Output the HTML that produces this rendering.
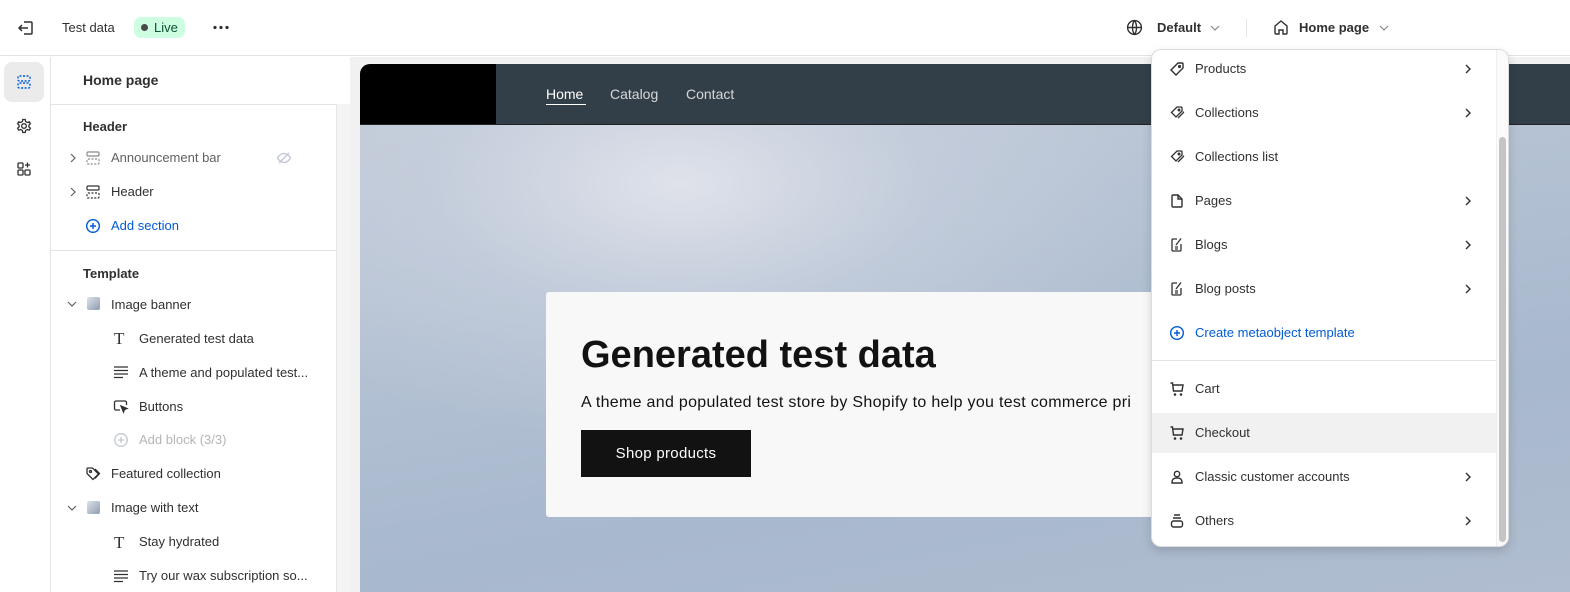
<!DOCTYPE html>
<html><head><meta charset="utf-8"><style>
*{box-sizing:border-box;margin:0;padding:0}
body{width:1570px;height:592px;overflow:hidden;font-family:"Liberation Sans",sans-serif;background:#fff;position:relative;color:#303030;font-size:13px}
.abs{position:absolute}
.top{left:0;top:0;width:1570px;height:56px;border-bottom:1px solid #e3e3e3;background:#fff}
.rail{left:0;top:57px;width:51px;height:535px;border-right:1px solid #e3e3e3}
.panel{left:51px;top:57px;width:285px;height:535px}
.row{position:absolute;left:0;height:20px;line-height:20px;font-size:13px;color:#303030;white-space:nowrap}
.gray{color:#616161}
svg{position:absolute}
.preview{left:350px;top:57px;width:1220px;height:535px;background:#f1f1f1}
.menu{left:1151px;top:49px;width:358px;height:498px;background:#fff;border:1px solid #dcdcdc;border-radius:10px;box-shadow:0 4px 10px rgba(0,0,0,.15);overflow:hidden}
.mi{position:absolute;left:0;width:344px;height:40px;line-height:40px;font-size:13px;color:#303030}
.mi span{position:absolute;left:43px}
.mi .ch{position:absolute;left:312px;top:14px}
</style></head><body>
<div class="abs top">
<svg style="left:17px;top:19px" width="18" height="18" viewBox="0 0 18 18" fill="none" stroke="#303030" stroke-width="1.5"><path d="M7 3h7a1 1 0 0 1 1 1v10a1 1 0 0 1-1 1H7"/><path d="M11 9H2M5 6L2 9l3 3"/></svg>
<div class="abs" style="left:62px;top:20px;font-size:13px">Test data</div>
<div class="abs" style="left:134px;top:17px;width:51px;height:21px;border-radius:7px;background:#cdfee1;font-size:13px;line-height:21px;padding-left:20px;color:#0c5132">Live</div>
<div class="abs" style="left:141px;top:24px;width:7px;height:7px;border-radius:50%;background:#4a4a4a"></div>
<svg style="left:212px;top:25px" width="18" height="5" viewBox="0 0 18 5" fill="#303030"><circle cx="3" cy="2.5" r="1.6"/><circle cx="9" cy="2.5" r="1.6"/><circle cx="15" cy="2.5" r="1.6"/></svg>
<svg style="left:1126px;top:19px" width="17" height="17" viewBox="0 0 16 16" fill="none" stroke="#303030" stroke-width="1.3"><circle cx="8" cy="8" r="6.5"/><path d="M1.5 8h13M8 1.5c-2.5 3-2.5 10 0 13M8 1.5c2.5 3 2.5 10 0 13"/></svg>
<div class="abs" style="left:1157px;top:20px;font-weight:bold;font-size:13px">Default</div>
<svg style="left:1210px;top:24px" width="10" height="8" viewBox="0 0 10 8" fill="none" stroke="#8a8a8a" stroke-width="1.2"><path d="M1 2l4 4 4-4"/></svg>
<div class="abs" style="left:1246px;top:19px;width:1px;height:18px;background:#e3e3e3"></div>
<svg style="left:1273px;top:19px" width="16" height="17" viewBox="0 0 16 17" fill="none" stroke="#303030" stroke-width="1.4"><path d="M2 7l6-5 6 5v7a1 1 0 0 1-1 1h-3v-4H6v4H3a1 1 0 0 1-1-1z"/></svg>
<div class="abs" style="left:1299px;top:20px;font-weight:bold;font-size:13px">Home page</div>
<svg style="left:1379px;top:24px" width="10" height="8" viewBox="0 0 10 8" fill="none" stroke="#8a8a8a" stroke-width="1.2"><path d="M1 2l4 4 4-4"/></svg>
</div>
<div class="abs rail">
<div class="abs" style="left:4px;top:5px;width:40px;height:40px;border-radius:8px;background:#ebebeb"></div>
<svg style="left:16px;top:17px" width="16" height="16" viewBox="0 0 16 16" fill="none" stroke="#005bd3" stroke-width="1.4"><rect x="2" y="2" width="12" height="5" rx="1.5" stroke-dasharray="2 1.5"/><rect x="2" y="9" width="12" height="5" rx="1.5" stroke-dasharray="2 1.5"/></svg>
<svg style="left:16px;top:61px" width="16" height="16" viewBox="0 0 16 16" fill="none" stroke="#303030" stroke-width="1.3"><circle cx="8" cy="8" r="2.3"/><path d="M6.8 1.5h2.4l.4 2 1.7 1 1.9-.7 1.2 2-1.5 1.4v1.6l1.5 1.4-1.2 2-1.9-.7-1.7 1-.4 2H6.8l-.4-2-1.7-1-1.9.7-1.2-2 1.5-1.4V7.2L1.6 5.8l1.2-2 1.9.7 1.7-1z"/></svg>
<svg style="left:16px;top:104px" width="16" height="16" viewBox="0 0 16 16" fill="none" stroke="#303030" stroke-width="1.3"><rect x="2" y="2" width="5" height="5" rx="1"/><rect x="2" y="9" width="5" height="5" rx="1"/><rect x="9" y="9" width="5" height="5" rx="1"/><path d="M11.5 1.5v5M9 4h5"/></svg>
</div>
<div class="abs panel">
<div class="row" style="left:32px;top:13px;font-size:14px;font-weight:600">Home page</div>
<div class="abs" style="left:0;top:47px;width:299px;height:1px;background:#e3e3e3"></div>
<div class="row" style="left:32px;top:60px;font-weight:600">Header</div>
<svg style="left:18px;top:96px" width="8" height="10" viewBox="0 0 8 10" fill="none" stroke="#616161" stroke-width="1.2"><path d="M2 1l4 4-4 4"/></svg>
<svg style="left:34px;top:93px" width="16" height="16" viewBox="0 0 16 16" fill="none" stroke="#8a8a8a" stroke-width="1.2"><rect x="2" y="2" width="12" height="4" rx="1"/><rect x="2" y="9" width="12" height="5" rx="1" stroke-dasharray="2 1.5"/></svg>
<div class="row gray" style="left:60px;top:91px">Announcement bar</div>
<svg style="left:225px;top:93px" width="16" height="16" viewBox="0 0 16 16" fill="none" stroke="#c2c6d6" stroke-width="1.3"><path d="M1.5 8s2.5-4.5 6.5-4.5S14.5 8 14.5 8 12 12.5 8 12.5 1.5 8 1.5 8z"/><path d="M3 13L13 3"/></svg>
<svg style="left:18px;top:130px" width="8" height="10" viewBox="0 0 8 10" fill="none" stroke="#616161" stroke-width="1.2"><path d="M2 1l4 4-4 4"/></svg>
<svg style="left:34px;top:127px" width="16" height="16" viewBox="0 0 16 16" fill="none" stroke="#303030" stroke-width="1.2"><rect x="2" y="2" width="12" height="4" rx="1"/><rect x="2" y="9" width="12" height="5" rx="1" stroke-dasharray="2 1.5"/></svg>
<div class="row" style="left:60px;top:125px">Header</div>
<svg style="left:34px;top:161px" width="16" height="16" viewBox="0 0 16 16" fill="none" stroke="#005bd3" stroke-width="1.4"><circle cx="8" cy="8" r="6.3"/><path d="M8 5v6M5 8h6"/></svg>
<div class="row" style="left:60px;top:159px;color:#005bd3">Add section</div>
<div class="abs" style="left:0;top:193px;width:285px;height:1px;background:#e3e3e3"></div>
<div class="row" style="left:32px;top:207px;font-weight:600">Template</div>
<svg style="left:16px;top:243px" width="10" height="8" viewBox="0 0 10 8" fill="none" stroke="#616161" stroke-width="1.2"><path d="M1 2l4 4 4-4"/></svg>
<div class="abs" style="left:36px;top:240px;width:13px;height:13px;border-radius:2px;background:linear-gradient(135deg,#dfe3ea,#8d9bb0)"></div>
<div class="row" style="left:60px;top:238px">Image banner</div>
<div class="row" style="left:63px;top:272px;font-family:'Liberation Serif',serif;font-size:17px">T</div>
<div class="row" style="left:88px;top:272px">Generated test data</div>
<svg style="left:62px;top:308px" width="16" height="14" viewBox="0 0 16 14" stroke="#303030" stroke-width="1.3"><path d="M1 2h14M1 5.5h14M1 9h14M1 12.5h9"/></svg>
<div class="row" style="left:88px;top:306px">A theme and populated test...</div>
<svg style="left:62px;top:341px" width="16" height="16" viewBox="0 0 16 16" fill="none" stroke="#303030" stroke-width="1.3"><path d="M7 12H3a1.5 1.5 0 0 1-1.5-1.5v-6A1.5 1.5 0 0 1 3 3h9a1.5 1.5 0 0 1 1.5 1.5V7"/><path d="M8 8l6 2.5-2.5 1-1 2.5z" fill="#303030"/></svg>
<div class="row" style="left:88px;top:340px">Buttons</div>
<svg style="left:62px;top:375px" width="16" height="16" viewBox="0 0 16 16" fill="none" stroke="#c2c6d0" stroke-width="1.3"><circle cx="8" cy="8" r="6.3"/><path d="M8 5v6M5 8h6"/></svg>
<div class="row" style="left:88px;top:373px;color:#b5b5b5">Add block (3/3)</div>
<svg style="left:34px;top:409px" width="16" height="16" viewBox="0 0 16 16" fill="none" stroke="#303030" stroke-width="1.3"><path d="M2 7.5V3a1 1 0 0 1 1-1h4.5l6 6-5.5 5.5z"/><circle cx="5.5" cy="5.5" r="1"/><path d="M10 3l4.5 4.5-4.5 5"/></svg>
<div class="row" style="left:60px;top:407px">Featured collection</div>
<svg style="left:16px;top:447px" width="10" height="8" viewBox="0 0 10 8" fill="none" stroke="#616161" stroke-width="1.2"><path d="M1 2l4 4 4-4"/></svg>
<div class="abs" style="left:36px;top:444px;width:13px;height:13px;border-radius:2px;background:linear-gradient(135deg,#dfe3ea,#8d9bb0)"></div>
<div class="row" style="left:60px;top:441px">Image with text</div>
<div class="row" style="left:63px;top:476px;font-family:'Liberation Serif',serif;font-size:17px">T</div>
<div class="row" style="left:88px;top:475px">Stay hydrated</div>
<svg style="left:62px;top:512px" width="16" height="14" viewBox="0 0 16 14" stroke="#303030" stroke-width="1.3"><path d="M1 2h14M1 5.5h14M1 9h14M1 12.5h9"/></svg>
<div class="row" style="left:88px;top:509px">Try our wax subscription so...</div>
</div>
<div class="abs" style="left:336px;top:104px;width:14px;height:488px;background:#f4f4f4;border-left:1px solid #e6e6e6"></div>
<div class="abs preview">
<div class="abs" style="left:10px;top:7px;width:1210px;height:528px;border-radius:10px 0 0 0;overflow:hidden;background:radial-gradient(ellipse 500px 260px at 320px 120px,#dfe2ea 0%,rgba(200,208,222,.6) 50%,rgba(180,194,212,0) 100%),linear-gradient(170deg,#c6cdd9 0%,#b3c1d3 40%,#a8b8cd 70%,#b0bdd0 100%)">
<div class="abs" style="left:0;top:0;width:136px;height:60px;background:#000"></div>
<div class="abs" style="left:136px;top:0;width:1074px;height:60px;background:#333f48"></div>
<div class="abs" style="left:0;top:60px;width:1210px;height:1px;background:#222"></div>
<div class="abs" style="left:186px;top:22px;color:#fff;font-size:14px">Home</div>
<div class="abs" style="left:186px;top:40px;width:40px;height:1px;background:#fff"></div>
<div class="abs" style="left:250px;top:22px;color:#d5d8db;font-size:14px">Catalog</div>
<div class="abs" style="left:326px;top:22px;color:#d5d8db;font-size:14px">Contact</div>
<div class="abs" style="left:186px;top:228px;width:640px;height:225px;background:#f8f8f8;border-radius:3px"></div>
<div class="abs" style="left:221px;top:270px;font-size:38px;font-weight:bold;color:#121212">Generated test data</div>
<div class="abs" style="left:221px;top:330px;font-size:16px;color:#121212;letter-spacing:.3px;white-space:nowrap">A theme and populated test store by Shopify to help you test commerce pri</div>
<div class="abs" style="left:221px;top:366px;width:170px;height:47px;background:#121212;color:#fff;font-size:15px;line-height:47px;text-align:center;letter-spacing:.3px">Shop products</div>
</div>
</div>
<div class="abs menu">
<div class="abs" style="left:344px;top:0;width:14px;height:498px;background:#fafafa;border-left:1px solid #eee"></div>
<div class="abs" style="left:347px;top:87px;width:7px;height:405px;border-radius:4px;background:#c4c4c4"></div>
<div class="mi" style="top:-1px"><svg style="left:17px;top:12px" width="16" height="16" viewBox="0 0 16 16" fill="none" stroke="#303030" stroke-width="1.4"><path d="M9 2h4a1 1 0 0 1 1 1v4l-7 7-5-5z"/><circle cx="10.5" cy="5.5" r=".9"/></svg><span>Products</span><svg class="ch" width="8" height="12" viewBox="0 0 8 12" fill="none" stroke="#303030" stroke-width="1.4"><path d="M2 2l4 4-4 4"/></svg></div>
<div class="mi" style="top:43px"><svg style="left:17px;top:12px" width="16" height="16" viewBox="0 0 16 16" fill="none" stroke="#303030" stroke-width="1.3"><path d="M8 2h4a1 1 0 0 1 1 1v3l-6 6-4.5-4.5z"/><circle cx="10" cy="5" r=".8"/><path d="M14.5 6.5v1L9 13"/></svg><span>Collections</span><svg class="ch" width="8" height="12" viewBox="0 0 8 12" fill="none" stroke="#303030" stroke-width="1.4"><path d="M2 2l4 4-4 4"/></svg></div>
<div class="mi" style="top:87px"><svg style="left:17px;top:12px" width="16" height="16" viewBox="0 0 16 16" fill="none" stroke="#303030" stroke-width="1.3"><path d="M8 2h4a1 1 0 0 1 1 1v3l-6 6-4.5-4.5z"/><circle cx="10" cy="5" r=".8"/><path d="M14.5 6.5v1L9 13"/></svg><span>Collections list</span></div>
<div class="mi" style="top:131px"><svg style="left:17px;top:12px" width="16" height="16" viewBox="0 0 16 16" fill="none" stroke="#303030" stroke-width="1.4"><path d="M3 3a1 1 0 0 1 1-1h5l4 4v7a1 1 0 0 1-1 1H4a1 1 0 0 1-1-1z"/><path d="M9 2v4h4"/></svg><span>Pages</span><svg class="ch" width="8" height="12" viewBox="0 0 8 12" fill="none" stroke="#303030" stroke-width="1.4"><path d="M2 2l4 4-4 4"/></svg></div>
<div class="mi" style="top:175px"><svg style="left:17px;top:11px" width="16" height="17" viewBox="0 0 16 17" fill="none" stroke="#303030" stroke-width="1.3"><path d="M8 3H4a1 1 0 0 0-1 1v10a1 1 0 0 0 1 1h7a1 1 0 0 0 1-1V8"/><path d="M7 9l5-6.5M6 11h3M6 13h3"/></svg><span>Blogs</span><svg class="ch" width="8" height="12" viewBox="0 0 8 12" fill="none" stroke="#303030" stroke-width="1.4"><path d="M2 2l4 4-4 4"/></svg></div>
<div class="mi" style="top:219px"><svg style="left:17px;top:11px" width="16" height="17" viewBox="0 0 16 17" fill="none" stroke="#303030" stroke-width="1.3"><path d="M8 3H4a1 1 0 0 0-1 1v10a1 1 0 0 0 1 1h7a1 1 0 0 0 1-1V8"/><path d="M7 9l5-6.5M6 11h3M6 13h3"/></svg><span>Blog posts</span><svg class="ch" width="8" height="12" viewBox="0 0 8 12" fill="none" stroke="#303030" stroke-width="1.4"><path d="M2 2l4 4-4 4"/></svg></div>
<div class="mi" style="top:263px;color:#005bd3"><svg style="left:17px;top:12px" width="16" height="16" viewBox="0 0 16 16" fill="none" stroke="#005bd3" stroke-width="1.4"><circle cx="8" cy="8" r="6.3"/><path d="M8 5v6M5 8h6"/></svg><span>Create metaobject template</span></div>
<div class="abs" style="left:0;top:310px;width:344px;height:1px;background:#e3e3e3"></div>
<div class="mi" style="top:319px"><svg style="left:17px;top:12px" width="16" height="16" viewBox="0 0 16 16" fill="none" stroke="#303030" stroke-width="1.4"><path d="M1.5 2h2l1 8h8.5l1-6H4"/><circle cx="6" cy="13.5" r=".6" fill="#303030"/><circle cx="12" cy="13.5" r=".6" fill="#303030"/></svg><span>Cart</span></div>
<div class="mi" style="top:363px;background:#f1f1f1"><svg style="left:17px;top:12px" width="16" height="16" viewBox="0 0 16 16" fill="none" stroke="#303030" stroke-width="1.4"><path d="M1.5 2h2l1 8h8.5l1-6H4"/><circle cx="6" cy="13.5" r=".6" fill="#303030"/><circle cx="12" cy="13.5" r=".6" fill="#303030"/></svg><span>Checkout</span></div>
<div class="mi" style="top:407px"><svg style="left:17px;top:12px" width="16" height="16" viewBox="0 0 16 16" fill="none" stroke="#303030" stroke-width="1.4"><circle cx="8" cy="5" r="2.7"/><path d="M3 14v-1a4 4 0 0 1 4-4h2a4 4 0 0 1 4 4v1z"/></svg><span>Classic customer accounts</span><svg class="ch" width="8" height="12" viewBox="0 0 8 12" fill="none" stroke="#303030" stroke-width="1.4"><path d="M2 2l4 4-4 4"/></svg></div>
<div class="mi" style="top:451px"><svg style="left:17px;top:12px" width="16" height="16" viewBox="0 0 16 16" fill="none" stroke="#303030" stroke-width="1.4"><path d="M5 2h6M4 5h8"/><rect x="2.5" y="8" width="11" height="6" rx="2"/></svg><span>Others</span><svg class="ch" width="8" height="12" viewBox="0 0 8 12" fill="none" stroke="#303030" stroke-width="1.4"><path d="M2 2l4 4-4 4"/></svg></div>
</div>
</body></html>
